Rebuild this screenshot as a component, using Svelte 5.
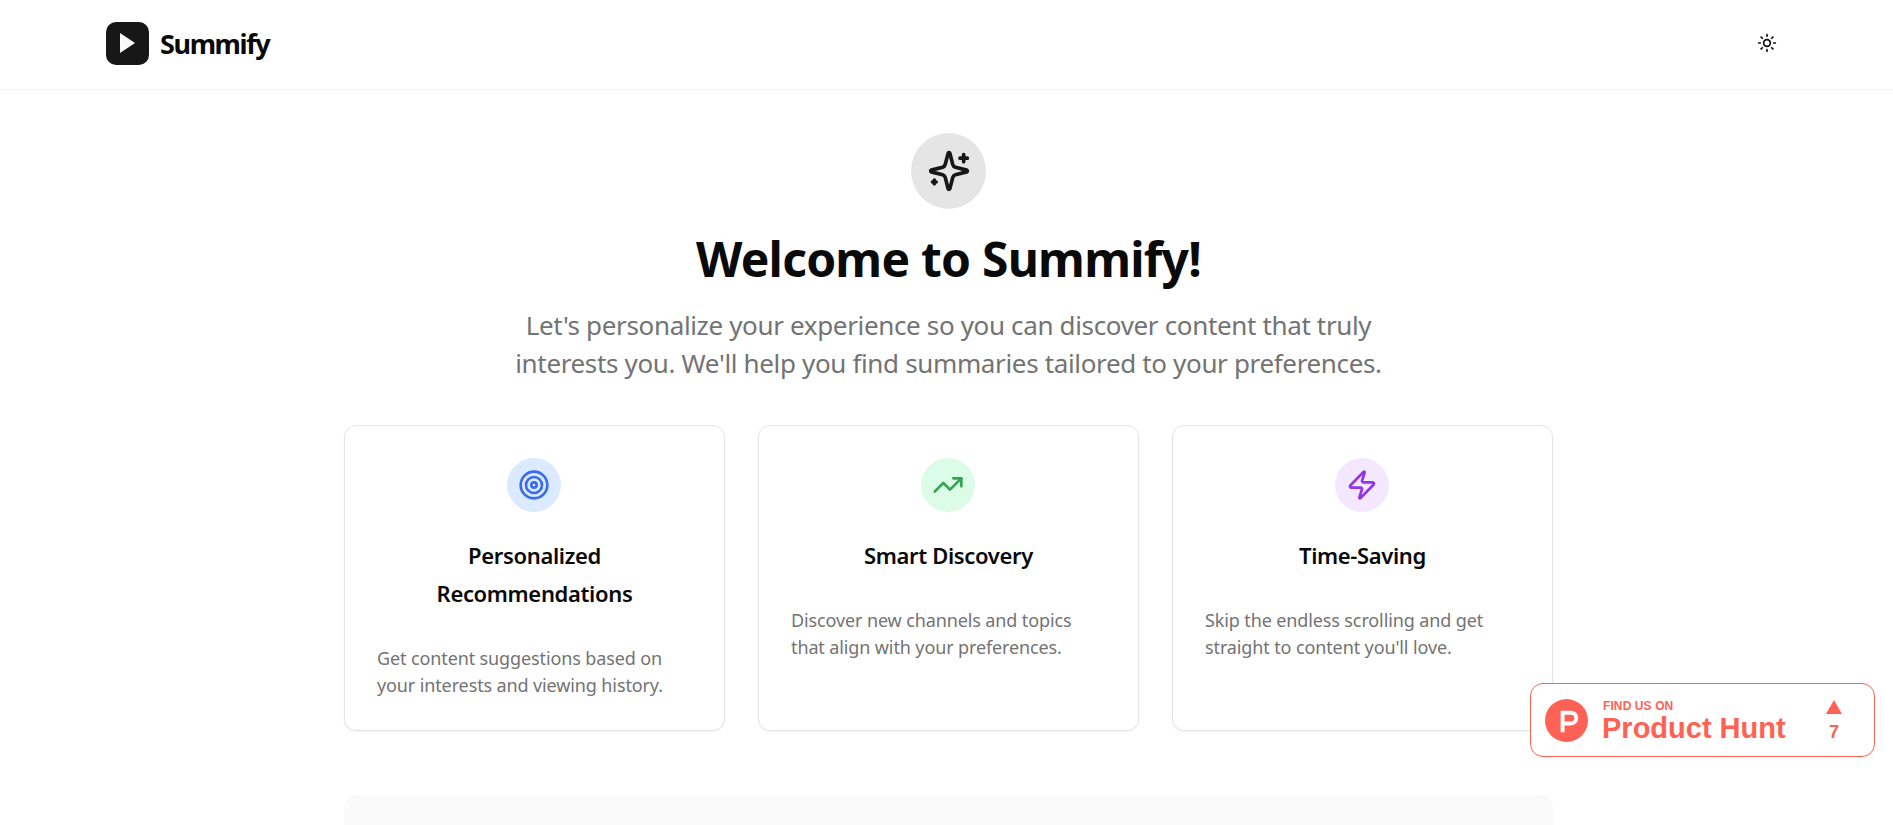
<script>
  const cards = [
    { title: 'Personalized Recommendations', text: 'Get content suggestions based on your interests and viewing history.', tone: 'blue', icon: 'target' },
    { title: 'Smart Discovery', text: 'Discover new channels and topics that align with your preferences.', tone: 'green', icon: 'trend' },
    { title: 'Time-Saving', text: "Skip the endless scrolling and get straight to content you'll love.", tone: 'purple', icon: 'zap' }
  ];
</script>

<div class="page">
  <header class="header">
    <div class="brand">
      <span class="logo">
        <svg viewBox="0 0 15 20" width="15" height="20"><path d="M0 0v20L15 10z" fill="#fafafa"/></svg>
      </span>
      <span class="name">Summify</span>
    </div>
    <button class="theme" aria-label="Toggle theme">
      <svg viewBox="0 0 24 24" width="20" height="20" fill="none" stroke="#0a0a0a" stroke-width="2" stroke-linecap="round" stroke-linejoin="round">
        <circle cx="12" cy="12" r="4"/><path d="M12 2v2M12 20v2M4.93 4.93l1.41 1.41M17.66 17.66l1.41 1.41M2 12h2M20 12h2M6.34 17.66l-1.41 1.41M19.07 4.93l-1.41 1.41"/>
      </svg>
    </button>
  </header>

  <main class="main">
    <div class="hero-icon">
      <svg viewBox="0 0 24 24" width="44" height="44" fill="none" stroke="#171717" stroke-width="2" stroke-linecap="round" stroke-linejoin="round">
        <path d="M9.937 15.5A2 2 0 0 0 8.5 14.063l-6.135-1.582a.5.5 0 0 1 0-.962L8.5 9.936A2 2 0 0 0 9.937 8.5l1.582-6.135a.5.5 0 0 1 .963 0L14.063 8.5A2 2 0 0 0 15.5 9.937l6.135 1.581a.5.5 0 0 1 0 .964L15.5 14.063a2 2 0 0 0-1.437 1.437l-1.582 6.135a.5.5 0 0 1-.963 0z"/>
        <path d="M20 3v4M22 5h-4M4 17v2M5 18H3"/>
      </svg>
    </div>
    <h1>Welcome to Summify!</h1>
    <p class="lead">Let's personalize your experience so you can discover content that truly interests you. We'll help you find summaries tailored to your preferences.</p>

    <section class="cards">
      {#each cards as c}
        <article class="card">
          <div class="badge-icon {c.tone}">
            {#if c.icon === 'target'}
              <svg viewBox="0 0 24 24" width="32" height="32" fill="none" stroke="#3b6cec" stroke-width="2" stroke-linecap="round" stroke-linejoin="round"><circle cx="12" cy="12" r="10"/><circle cx="12" cy="12" r="6"/><circle cx="12" cy="12" r="2"/></svg>
            {:else if c.icon === 'trend'}
              <svg viewBox="0 0 24 24" width="32" height="32" fill="none" stroke="#36a552" stroke-width="2" stroke-linecap="round" stroke-linejoin="round"><path d="M22 7l-8.5 8.5-5-5L2 17"/><path d="M16 7h6v6"/></svg>
            {:else}
              <svg viewBox="0 0 24 24" width="32" height="32" fill="none" stroke="#9333ea" stroke-width="2" stroke-linecap="round" stroke-linejoin="round"><path d="M4 14a1 1 0 0 1-.78-1.63l9.9-10.2a.5.5 0 0 1 .86.46l-1.92 6.02A1 1 0 0 0 13 10h7a1 1 0 0 1 .78 1.63l-9.9 10.2a.5.5 0 0 1-.86-.46l1.92-6.02A1 1 0 0 0 11 14z"/></svg>
            {/if}
          </div>
          <h2>{c.title}</h2>
          <p>{c.text}</p>
        </article>
      {/each}
    </section>

    <div class="next"></div>
  </main>

  <a class="ph" href="#top">
    <svg class="ph-logo" viewBox="0 0 44 44" width="43" height="43"><circle cx="22" cy="22" r="22" fill="#ff6154"/><path d="M16 12h10.5a7.5 7.5 0 0 1 0 15H20v7h-4zM20 16v7h6.5a3.5 3.5 0 0 0 0-7z" fill="#fff" fill-rule="evenodd"/></svg>
    <span class="ph-text"><small>FIND US ON</small><strong>Product Hunt</strong></span>
    <span class="ph-vote"><i></i><b>7</b></span>
  </a>
</div>

<style>
  :global(body) { margin: 0; background: #fff; }
  .page {
    position: relative;
    height: 825px;
    overflow: hidden;
    font-family: "Noto Sans", "Open Sans", sans-serif;
    color: #0a0a0a;
  }
  .header {
    height: 86px;
    box-sizing: content-box;
    border-bottom: 1px solid #f3f3f3;
    display: flex;
    align-items: center;
    justify-content: space-between;
    padding: 0 106px 3px 106px;
  }
  .brand { display: flex; align-items: center; gap: 11px; }
  .logo {
    width: 43px; height: 43px; border-radius: 10px; background: #171717;
    display: flex; align-items: center; justify-content: center;
  }
  .name { font-size: 27px; font-weight: 700; letter-spacing: -1.4px; }
  .theme { width: 40px; height: 40px; border: 0; background: none; padding: 0; display: flex; align-items: center; justify-content: center; }
  .main { width: 1209px; margin-left: 344px; padding-top: 43px; display: flex; flex-direction: column; align-items: center; }
  .hero-icon { width: 75px; height: 76px; border-radius: 50%; background: #e5e5e5; display: flex; align-items: center; justify-content: center; }
  h1 { margin: 20px 0 0; font-size: 48px; line-height: 60px; font-weight: 700; letter-spacing: -0.77px; }
  .lead { margin: 17px 0 0; width: 896px; text-align: center; font-size: 26px; line-height: 38px; color: #737373; letter-spacing: -0.35px; }
  .cards { margin-top: 43px; width: 100%; display: grid; grid-template-columns: repeat(3, 1fr); gap: 33px; }
  .card {
    height: 306px; box-sizing: border-box; border: 1px solid #e5e5e5; border-radius: 12px;
    padding: 32px; box-shadow: 0 1px 2px rgba(0,0,0,.05); background: #fff;
    display: flex; flex-direction: column; align-items: center;
  }
  .badge-icon { width: 54px; height: 54px; margin-left: -1px; border-radius: 50%; display: flex; align-items: center; justify-content: center; flex: none; }
  .blue { background: #dbeafe; }
  .green { background: #dcfce7; }
  .purple { background: #f3e8ff; }
  .card h2 { margin: 24px 0 0; width: 100%; text-align: center; font-size: 22px; line-height: 38px; font-weight: 600; letter-spacing: -0.35px; padding: 0 20px; box-sizing: border-box; }
  .card p { margin: 33px 0 0; width: 100%; font-size: 18px; line-height: 27px; color: #737373; letter-spacing: -0.12px; }
  .next { margin-top: 64px; width: 100%; height: 120px; border-radius: 12px; background: #fafafa; }
  .ph {
    position: absolute; left: 1530px; top: 683px; width: 345px; height: 74px; box-sizing: border-box;
    border: 1.5px solid #ff6154; border-radius: 13px; background: #fff; color: #ff6154;
    font-family: "Liberation Sans", Arial, sans-serif; text-decoration: none;
    display: flex; align-items: center; padding-left: 14px;
  }
  .ph-logo { flex: none; }
  .ph-text { display: flex; flex-direction: column; margin: 5px 0 0 15px; width: 198px; }
  .ph-text small { font-size: 12px; line-height: 11px; font-weight: 700; letter-spacing: .1px; margin-top: -1px; }
  .ph-text strong { font-size: 29px; line-height: 32px; font-weight: 700; white-space: nowrap; margin-left: -1px; }
  .ph-vote { margin: -1px 0 0 25px; display: flex; flex-direction: column; align-items: center; gap: 10px; }
  .ph-vote i { width: 0; height: 0; border-left: 8px solid transparent; border-right: 8px solid transparent; border-bottom: 14px solid #ff6154; }
  .ph-vote b { font-size: 18px; line-height: 16px; }
</style>
